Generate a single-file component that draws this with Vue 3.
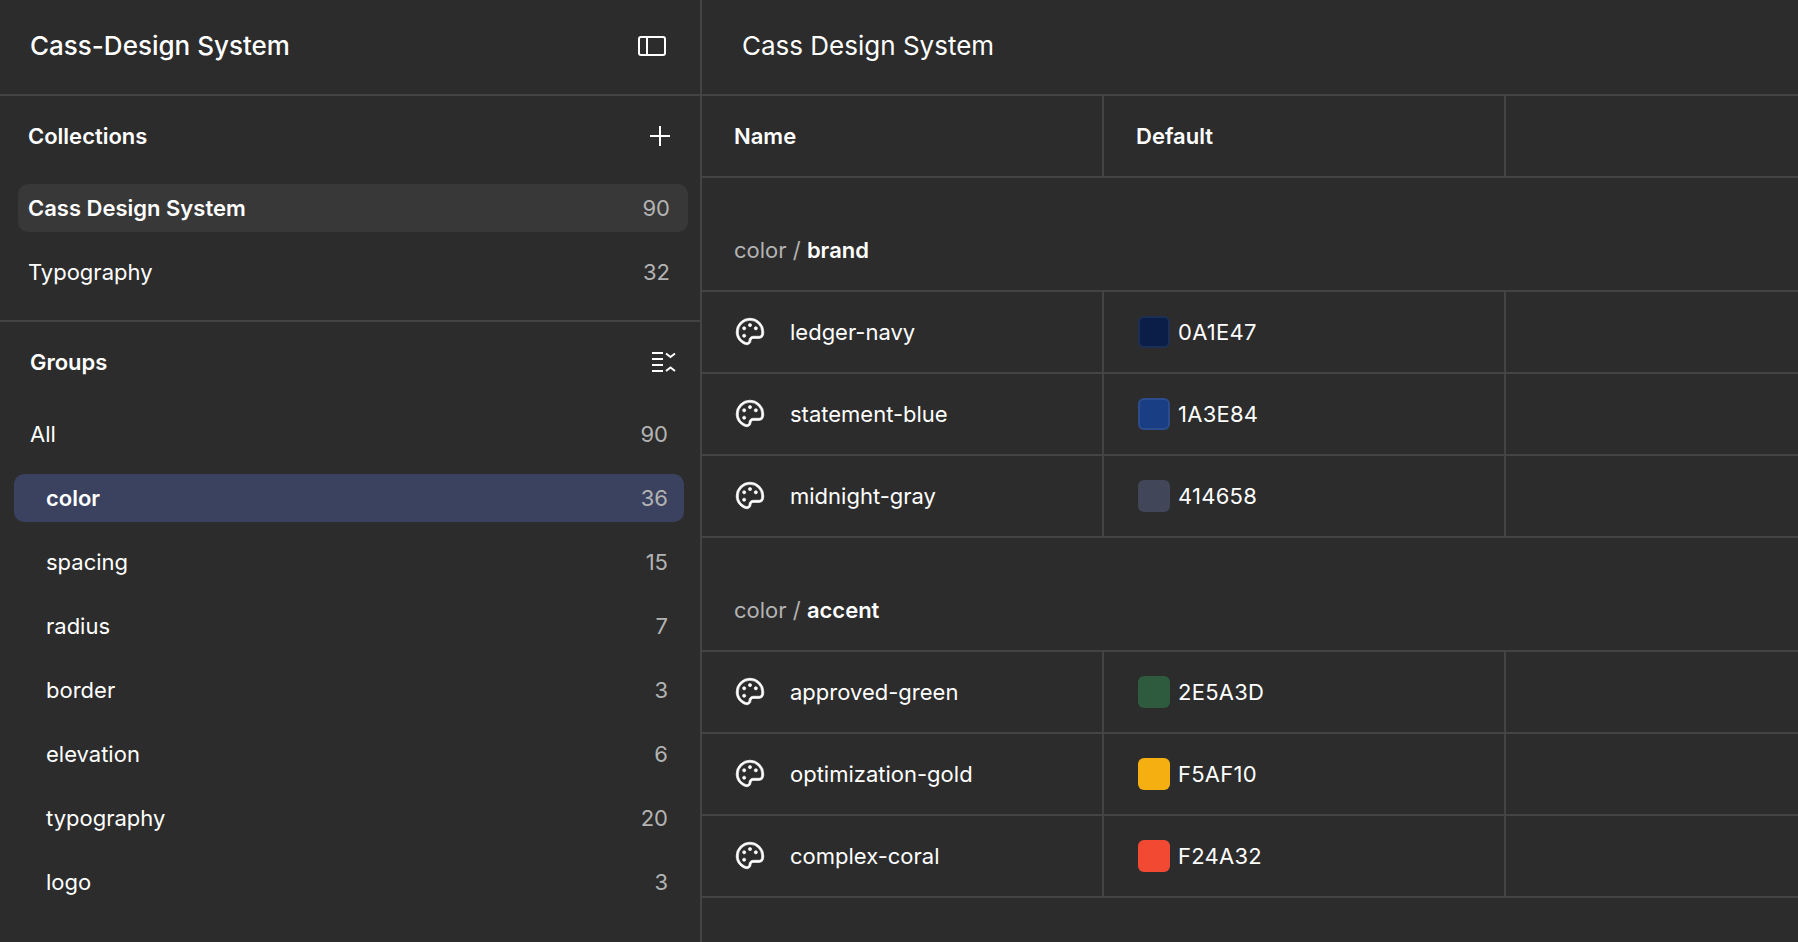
<script setup>
const collections = [
  { name: 'Cass Design System', count: 90, active: true },
  { name: 'Typography', count: 32 }
]
const groups = [
  { name: 'color', count: 36, active: true },
  { name: 'spacing', count: 15 },
  { name: 'radius', count: 7 },
  { name: 'border', count: 3 },
  { name: 'elevation', count: 6 },
  { name: 'typography', count: 20 },
  { name: 'logo', count: 3 }
]
const sections = [
  {
    title: 'brand',
    tokens: [
      { name: 'ledger-navy', value: '0A1E47', edged: true },
      { name: 'statement-blue', value: '1A3E84', edged: true },
      { name: 'midnight-gray', value: '414658' }
    ]
  },
  {
    title: 'accent',
    tokens: [
      { name: 'approved-green', value: '2E5A3D' },
      { name: 'optimization-gold', value: 'F5AF10' },
      { name: 'complex-coral', value: 'F24A32' }
    ]
  }
]
</script>

<template>
  <div class="page">
    <aside class="side">
      <div class="brand">
        <span class="brand-name">Cass-Design System</span>
        <svg class="ico" width="30" height="22" viewBox="0 0 30 22" fill="none" stroke="#fff" stroke-width="2">
          <rect x="2" y="2" width="26" height="18" rx="2" />
          <path d="M10 2v18" />
        </svg>
      </div>

      <section class="coll">
        <div class="head">
          <span>Collections</span>
          <svg width="22" height="22" viewBox="0 0 22 22" fill="none" stroke="#fff" stroke-width="2">
            <path d="M11 1v20M1 11h20" />
          </svg>
        </div>
        <div v-for="c in collections" :key="c.name" class="coll-row" :class="{ active: c.active }">
          <span>{{ c.name }}</span>
          <span class="num">{{ c.count }}</span>
        </div>
      </section>

      <section class="grp">
        <div class="head">
          <span>Groups</span>
          <svg width="26" height="22" viewBox="0 0 26 22" fill="none" stroke="#fff" stroke-width="2">
            <path d="M2 2h11M2 8h11M2 14h11M2 20h11" />
            <path d="M16 2.500l4.500 3.500 4.500-3.500M16 20l4.500-3.500 4.500 3.500" />
          </svg>
        </div>
        <div class="grp-row all">
          <span>All</span>
          <span class="num">90</span>
        </div>
        <div v-for="g in groups" :key="g.name" class="grp-row" :class="{ active: g.active }">
          <span>{{ g.name }}</span>
          <span class="num">{{ g.count }}</span>
        </div>
      </section>
    </aside>

    <main class="main">
      <div class="main-title">Cass Design System</div>
      <div class="row head-row">
        <div class="cell">Name</div>
        <div class="cell">Default</div>
        <div class="cell"></div>
      </div>
      <template v-for="s in sections" :key="s.title">
        <div class="sec-title">color / <b>{{ s.title }}</b></div>
        <div v-for="t in s.tokens" :key="t.name" class="row">
          <div class="cell name">
            <svg width="34" height="34" viewBox="0 0 256 256" fill="#fff" stroke="#fff" stroke-width="5">
              <path d="M200.77,53.89A103.27,103.27,0,0,0,128,24h-1.07A104,104,0,0,0,24,128c0,43,26.58,79.06,69.36,94.17A32,32,0,0,0,136,192a16,16,0,0,1,16-16h46.21a31.81,31.81,0,0,0,31.2-24.88,104.43,104.43,0,0,0,2.59-24A103.28,103.28,0,0,0,200.77,53.89Zm13,93.71A15.89,15.89,0,0,1,198.21,160H152a32,32,0,0,0-32,32,16,16,0,0,1-21.31,15.07C62.49,194.3,40,164,40,128a88,88,0,0,1,87.09-88h.9a88.35,88.35,0,0,1,88,87.25A88.86,88.86,0,0,1,213.81,147.6ZM140,76a12,12,0,1,1-12-12A12,12,0,0,1,140,76ZM96,100A12,12,0,1,1,84,88,12,12,0,0,1,96,100Zm0,56a12,12,0,1,1-12-12A12,12,0,0,1,96,156Zm88-56a12,12,0,1,1-12-12A12,12,0,0,1,184,100Z" />
            </svg>
            <span>{{ t.name }}</span>
          </div>
          <div class="cell val">
            <span class="swatch" :class="{ edged: t.edged }" :style="{ background: '#' + t.value }"></span>
            <span>{{ t.value }}</span>
          </div>
          <div class="cell"></div>
        </div>
      </template>
    </main>
  </div>
</template>

<style scoped>
.page {
  display: flex;
  width: 1798px;
  height: 942px;
  overflow: hidden;
  background: #2c2c2c;
  color: #fff;
  font-family: Inter, "Noto Sans", sans-serif;
  font-size: 22px;
}
.side {
  width: 700px;
  flex-shrink: 0;
  box-sizing: border-box;
}
.brand {
  height: 96px;
  box-sizing: border-box;
  border-bottom: 2px solid #444;
  display: flex;
  align-items: center;
  justify-content: space-between;
  padding: 0 33px 3px 30px;
}
.brand-name {
  font-size: 26px;
  font-weight: 500;
}
.head {
  display: flex;
  align-items: center;
  justify-content: space-between;
  font-weight: 600;
}
.coll {
  height: 226px;
  box-sizing: border-box;
  border-bottom: 2px solid #444;
  padding: 0 12px 0 18px;
}
.coll .head {
  height: 80px;
  padding: 0 17px 0 10px;
  margin-bottom: 8px;
}
.coll-row {
  height: 48px;
  margin-bottom: 16px;
  border-radius: 10px;
  padding: 0 18px 0 10px;
  display: flex;
  align-items: center;
  justify-content: space-between;
}
.coll-row.active {
  background: #383838;
  font-weight: 600;
}
.grp {
  padding: 0 16px 0 14px;
}
.grp .head {
  height: 80px;
  margin-bottom: 8px;
  padding: 0 8px 0 16px;
}
.grp-row {
  height: 48px;
  margin-bottom: 16px;
  border-radius: 10px;
  padding: 0 16px 0 32px;
  display: flex;
  align-items: center;
  justify-content: space-between;
}
.grp-row.all {
  padding-left: 16px;
}
.grp-row.active {
  background: #3a4260;
  font-weight: 600;
}
.num {
  color: #b3b3b3;
  font-weight: 400;
}
.main {
  flex: 1;
  border-left: 2px solid #444;
}
.main-title {
  height: 96px;
  box-sizing: border-box;
  border-bottom: 2px solid #444;
  display: flex;
  align-items: center;
  padding: 0 0 3px 40px;
  font-size: 26px;
}
.row {
  display: flex;
  height: 82px;
  box-sizing: border-box;
  border-bottom: 2px solid #444;
}
.cell {
  width: 402px;
  flex-shrink: 0;
  box-sizing: border-box;
  border-right: 2px solid #444;
  display: flex;
  align-items: center;
  padding-left: 32px;
}
.cell:last-child {
  border-right: 0;
}
.head-row .cell {
  font-weight: 600;
}
.sec-title {
  height: 114px;
  box-sizing: border-box;
  border-bottom: 2px solid #444;
  padding: 59px 0 0 32px;
  color: #b3b3b3;
}
.sec-title b {
  color: #fff;
  font-weight: 600;
}
.name {
  gap: 23px;
}
.name svg {
  margin-left: -1px;
}
.val {
  gap: 8px;
  letter-spacing: .25px;
}
.swatch {
  width: 32px;
  height: 32px;
  margin-left: 2px;
  box-sizing: border-box;
  border-radius: 6px;
  flex-shrink: 0;
}
.swatch.edged {
  border: 2px solid rgba(255, 255, 255, .08);
}
</style>
